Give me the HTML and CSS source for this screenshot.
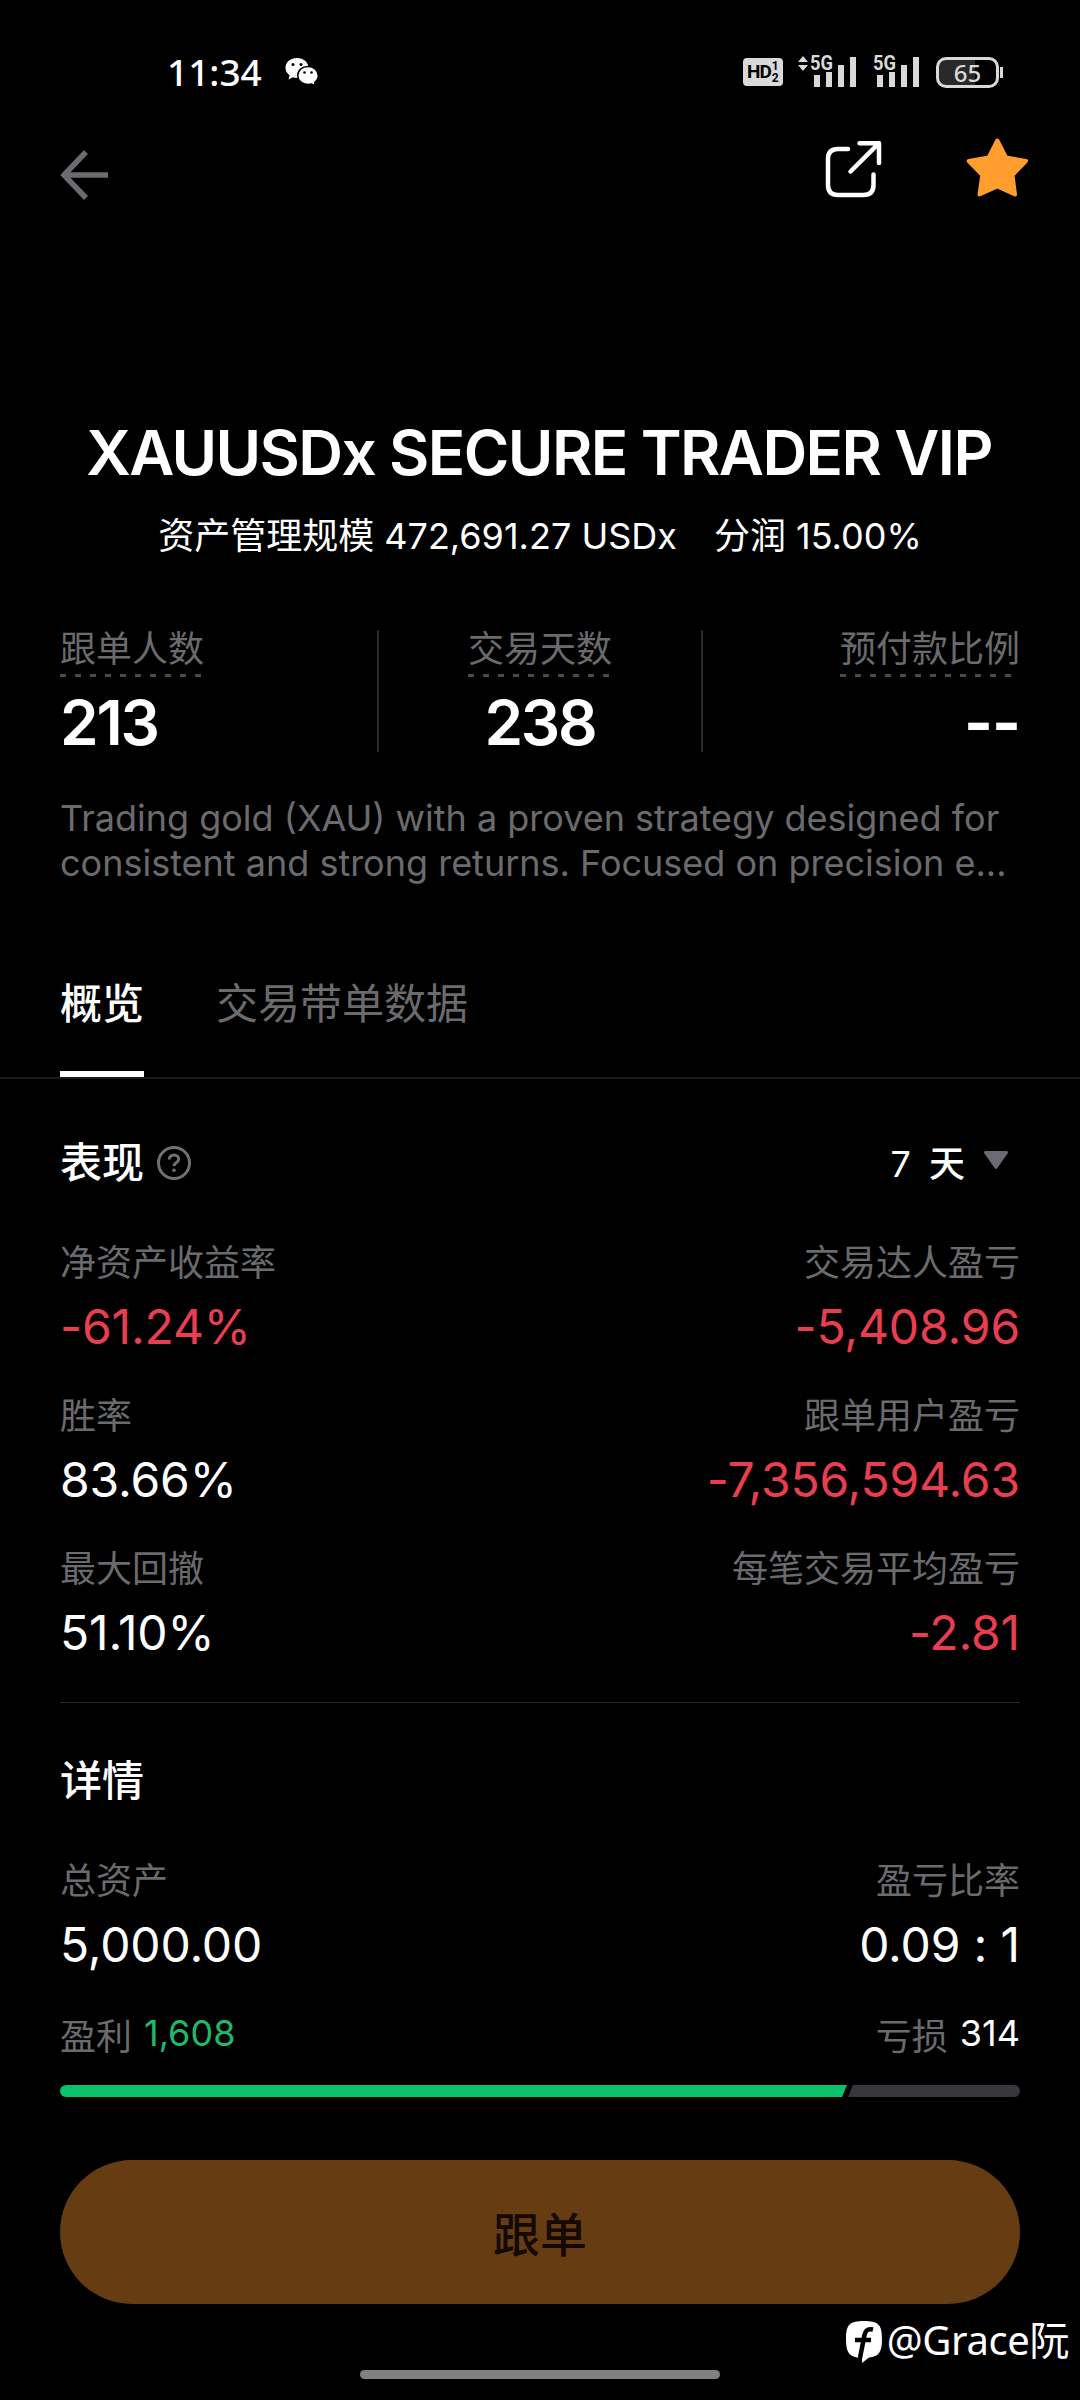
FILE: index.html
```
<!DOCTYPE html>
<html lang="zh-CN">
  <head>
    <meta charset="UTF-8" />
    <meta name="viewport" content="width=device-width, initial-scale=1.0" />
    <title>XAUUSDx SECURE TRADER VIP</title>
    <link rel="stylesheet" href="styles.css">
  </head>
  <body>
    <div class="status-bar">
      <span class="time">11:34</span>
      <svg class="wechat" width="34" height="30" viewBox="0 0 34 30">
        <path fill="#fff" d="M12 1C5.400 1 .5 5.300 .5 10.800c0 3.100 1.600 5.700 4.100 7.500L3.500 22.500l4.400-2.200c1.300.4 2.700.6 4.100.6 6.400 0 11.500-4.600 11.500-10.100S18.400 1 12 1z"/>
        <path fill="#fff" stroke="#000" stroke-width="1.500" d="M23 9.500c-5.900 0-10.300 4-10.300 9s4.400 9 10.300 9c1.200 0 2.500-.2 3.600-.5l4 2-1-3.500c2.200-1.700 3.700-4.200 3.700-7 0-5-4.400-9-10.300-9z"/>
        <g fill="#000"><circle cx="8" cy="7.500" r="1.500"/><circle cx="16" cy="7.500" r="1.500"/><circle cx="19.500" cy="15.500" r="1.300"/><circle cx="26.500" cy="15.500" r="1.300"/></g>
      </svg>
      <div class="status-icons">
        <div class="hd"><span>HD</span><span class="hd-num"><i>1</i><i>2</i></span></div>
        <svg class="signal" width="62" height="36" viewBox="0 0 62 36" fill="#d9d9d9">
          <path d="M6 4l5 6H1zM6 19l5-6H1z"/>
          <text x="13" y="18" font-size="20" textLength="23" lengthAdjust="spacingAndGlyphs">5G</text>
          <path d="M17 23h6v12h-6zM29 20h6v15h-6zM41 13h6v22h-6zM53 5h6v30h-6z"/>
        </svg>
        <svg class="signal second" width="48" height="36" viewBox="0 0 48 36" fill="#d9d9d9">
          <text x="0" y="18" font-size="20" textLength="23" lengthAdjust="spacingAndGlyphs">5G</text>
          <path d="M4 23h6v12H4zM16 20h6v15h-6zM28 13h6v22h-6zM40 5h6v30h-6z"/>
        </svg>
        <div class="battery">65</div>
      </div>
    </div>

    <div class="nav">
      <svg class="back" width="50" height="50" viewBox="0 0 50 50" fill="none" stroke="#6b6b70" stroke-width="5.500">
        <path d="M26 2L4 25l22 23M4 25h44"/>
      </svg>
      <svg class="share" width="60" height="60" viewBox="0 0 60 60" fill="none" stroke="#fff" stroke-width="4.500" stroke-linecap="round" stroke-linejoin="round">
        <path d="M24 9H14Q4 9 4 19v26q0 10 10 10h25.500q10 0 10-10V34.500M35.500 3.200H55V23M55 3.200L26.500 31.500"/>
      </svg>
      <svg class="star" width="64" height="62" viewBox="0 0 64 62">
        <path fill="#ff9d2e" stroke="#ff9d2e" stroke-width="4" stroke-linejoin="round" d="M31.300 3.500L40 20.500 60 24 46.500 38 49 57.500 31.300 49.500 13.500 57.500 16.300 38 2.700 24l20-3.500z"/>
      </svg>
    </div>

    <div class="profile">
      <h1>XAUUSDx SECURE TRADER VIP</h1>
      <div class="subtitle"><span>资产管理规模 472,691.27 USDx</span><span>分润 15.00%</span></div>
      <div class="stats">
        <div class="stat">
          <span class="label">跟单人数</span>
          <strong>213</strong>
        </div>
        <div class="stat center">
          <span class="label">交易天数</span>
          <strong>238</strong>
        </div>
        <div class="stat right">
          <span class="label">预付款比例</span>
          <strong>--</strong>
        </div>
      </div>
      <p class="description">Trading gold (XAU) with a proven strategy designed for<br>consistent and strong returns. Focused on precision e...</p>
    </div>

    <div class="tabs">
      <div class="tab active">概览</div>
      <div class="tab">交易带单数据</div>
    </div>

    <div class="section performance">
      <div class="section-head">
        <h2>表现</h2>
        <svg class="help" width="36" height="36" viewBox="0 0 36 36" fill="none" stroke="#707074" stroke-width="3">
          <circle cx="18" cy="18" r="15.500"/>
          <path d="M13.300 14.500c0-2.800 2-4.500 4.700-4.500s4.700 1.700 4.700 4.200c0 3.300-4.700 3.600-4.700 6.800"/>
          <circle cx="18" cy="25.300" r="1.800" fill="#707074" stroke="none"/>
        </svg>
        <div class="period">
          <span>7</span><span>天</span>
          <svg width="26" height="20" viewBox="0 0 26 20"><path fill="#6b6b73" stroke="#6b6b73" stroke-width="3" stroke-linejoin="round" d="M2.500 2.500h21L13 17.500z"/></svg>
        </div>
      </div>
      <div class="row">
        <div><div class="label">净资产收益率</div><div class="value red">-61.24%</div></div>
        <div class="right"><div class="label">交易达人盈亏</div><div class="value red">-5,408.96</div></div>
      </div>
      <div class="row">
        <div><div class="label">胜率</div><div class="value">83.66%</div></div>
        <div class="right"><div class="label">跟单用户盈亏</div><div class="value red">-7,356,594.63</div></div>
      </div>
      <div class="row">
        <div><div class="label">最大回撤</div><div class="value">51.10%</div></div>
        <div class="right"><div class="label">每笔交易平均盈亏</div><div class="value red">-2.81</div></div>
      </div>
    </div>

    <div class="section details">
      <h2>详情</h2>
      <div class="row">
        <div><div class="label">总资产</div><div class="value">5,000.00</div></div>
        <div class="right"><div class="label">盈亏比率</div><div class="value">0.09 : 1</div></div>
      </div>
      <div class="ratio">
        <div><span class="label">盈利</span><span class="count green">1,608</span></div>
        <div><span class="label">亏损</span><span class="count">314</span></div>
      </div>
      <div class="bar">
        <div class="win"></div>
        <div class="loss"></div>
      </div>
    </div>

    <button class="follow">跟单</button>

    <div class="watermark">
      <svg width="38" height="44" viewBox="0 0 38 44">
        <path fill="#fff" d="M19 1C5 1 1 4 1 19c0 13 3 17 11 18.500l5 .5v5l7-5.500c10-1 13-5.500 13-18.500C37 4 33 1 19 1z"/>
        <path fill="none" stroke="#000" stroke-width="4.500" d="M28 9.500c-6-1.500-8 1.500-9 8L15 38M10 20h16"/>
      </svg>
      <span>@Grace阮</span>
    </div>
    <div class="home-bar"></div>
  </body>
</html>
```
FILE: styles.css
```
* {
  box-sizing: border-box;
}
body {
  position: relative;
  margin: 0;
  width: 1080px;
  height: 2400px;
  background: #000;
  color: #fff;
  font-family: Inter, "Noto Sans CJK SC", sans-serif;
  overflow: hidden;
}
h1,
h2,
p {
  margin: 0;
}

/* status bar */
.status-bar {
  display: flex;
  align-items: center;
  height: 110px;
  padding: 34px 77px 0 167px;
  font-family: "Noto Sans", sans-serif;
}
.time {
  width: 118px;
  font-size: 37px;
  font-weight: 500;
  line-height: 40px;
}
.status-icons {
  display: flex;
  align-items: center;
  margin-left: auto;
}
.hd {
  display: flex;
  align-items: center;
  width: 40px;
  height: 28px;
  padding-left: 4px;
  border-radius: 4px;
  background: #d9d9d9;
  color: #000;
  font: bold 19px/28px Roboto, sans-serif;
  letter-spacing: -1px;
}
.hd-num {
  display: flex;
  flex-direction: column;
  margin-left: 1px;
  font-size: 12px;
  letter-spacing: 0;
  line-height: 12px;
}
.hd-num i {
  height: 12px;
  font-style: normal;
}
.signal {
  margin: -5px 0 0 14px;
  font-family: Roboto, sans-serif;
  font-weight: bold;
}
.signal.second {
  margin-left: 14px;
}
.battery {
  position: relative;
  width: 63px;
  height: 31px;
  margin-left: 15px;
  margin-right: 4px;
  border: 3px solid #d9d9d9;
  border-radius: 10px;
  background: linear-gradient(90deg, #292929 36px, #000 36px);
  color: #d9d9d9;
  font-size: 24px;
  font-weight: 500;
  line-height: 25px;
  text-align: center;
}
.battery::after {
  content: "";
  position: absolute;
  right: -7px;
  top: 7px;
  width: 3px;
  height: 11px;
  background: #d9d9d9;
}

/* nav */
.nav {
  display: flex;
  height: 303px;
  padding: 27px 50px 0 60px;
}
.back {
  margin-top: 13px;
}
.share {
  margin: 3px 82px 0 auto;
}

/* profile */
.profile {
  height: 570px;
  padding: 0 60px;
}
h1 {
  margin-left: -2px;
  font-size: 62px;
  font-weight: 600;
  letter-spacing: -1.6px;
  line-height: 80px;
  text-align: center;
  white-space: nowrap;
}
.subtitle {
  display: flex;
  justify-content: center;
  gap: 37px;
  margin-top: 19px;
  font-size: 36px;
  line-height: 48px;
}
.label {
  color: #6b6b6e;
  font-size: 36px;
  line-height: 36px;
}
.stats {
  display: grid;
  grid-template-columns: 317px 326px 317px;
  height: 120px;
  margin-top: 70px;
}
.stat {
  display: flex;
  flex-direction: column;
  align-items: flex-start;
}
.stat.center {
  align-items: center;
  border: solid #29292c;
  border-width: 0 2px;
}
.stat.right {
  align-items: flex-end;
}
.stat .label {
  height: 47px;
  padding-top: 1px;
  background: repeating-linear-gradient(90deg, #4a4a4d 0 6px, transparent 6px 15px) 0 100% / 100% 3px no-repeat;
}
.stat strong {
  margin-top: 17px;
  font-size: 62px;
  font-weight: 600;
  letter-spacing: -2.2px;
  line-height: 58px;
}
.stat.right strong {
  font-weight: 700;
  letter-spacing: -1px;
}
.description {
  margin-top: 46px;
  color: #6b6b6e;
  font-size: 36px;
  line-height: 45px;
  white-space: nowrap;
}

/* tabs */
.tabs {
  display: flex;
  gap: 72px;
  height: 96px;
  padding: 0 60px;
  border-bottom: 2px solid #1b1b1d;
}
.tab {
  height: 94px;
  color: #6b6b6e;
  font-size: 42px;
  line-height: 42px;
}
.tab.active {
  border-bottom: 6px solid #fff;
  color: #fff;
  font-weight: 500;
}

/* sections */
.section {
  margin: 0 60px;
}
h2 {
  font-size: 42px;
  font-weight: 500;
  line-height: 42px;
}
.section-head {
  display: flex;
  height: 103px;
}
.performance {
  height: 624px;
  padding-top: 63px;
  border-bottom: 1px solid #29292c;
}
.help {
  margin: 3px 0 0 12px;
}
.period {
  display: flex;
  gap: 18px;
  margin: 4px 11px 0 auto;
  font-size: 36px;
  line-height: 36px;
}
.period span:last-of-type {
  font-weight: 500;
}
.period svg {
  margin-top: 4px;
}
.row {
  display: flex;
  justify-content: space-between;
  margin-bottom: 46px;
}
.right {
  text-align: right;
}
.value {
  margin-top: 21px;
  font-size: 48px;
  letter-spacing: -0.15px;
  line-height: 50px;
}
.red {
  color: #e83e50;
}
.green {
  color: #1fb96b;
}
.details {
  padding-top: 57px;
}
.details .row {
  margin-top: 61px;
}
.ratio {
  display: flex;
  justify-content: space-between;
  margin-top: 48px;
}
.ratio > div {
  display: flex;
  gap: 12px;
}
.ratio .label {
  padding-top: 1px;
  height: 36px;
}
.count {
  font-size: 36px;
  line-height: 30px;
}
.bar {
  display: flex;
  height: 12px;
  margin-top: 31px;
  border-radius: 6px;
  overflow: hidden;
}
.win {
  width: 787px;
  background: #0ac26a;
  clip-path: polygon(0 0, 100% 0, calc(100% - 5px) 100%, 0 100%);
}
.loss {
  flex: 1;
  background: #36383c;
  clip-path: polygon(6px 0, 100% 0, 100% 100%, 1px 100%);
}

/* footer */
.follow {
  display: block;
  width: 960px;
  height: 144px;
  margin: 63px 60px 0;
  padding: 5px 0 0;
  border: none;
  border-radius: 72px;
  background: #663d12;
  color: #140903;
  font: 500 47px/48px Inter, "Noto Sans CJK SC", sans-serif;
}
.watermark {
  display: flex;
  justify-content: flex-end;
  gap: 4px;
  margin: 16px 11px 0 0;
  font-family: "Noto Sans", "Noto Sans CJK SC", sans-serif;
  font-size: 40px;
  letter-spacing: -0.4px;
  line-height: 40px;
}
.home-bar {
  width: 360px;
  height: 9px;
  margin: 6px auto 0;
  border-radius: 5px;
  background: #808080;
}
```
